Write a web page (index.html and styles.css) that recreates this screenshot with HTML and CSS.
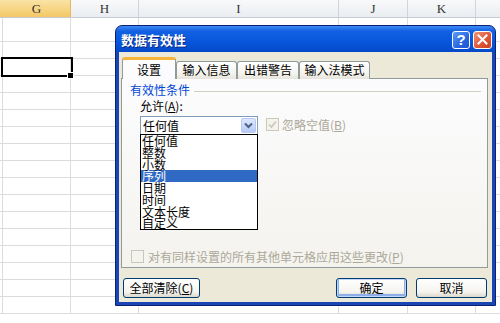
FILE: index.html
```html
<!DOCTYPE html>
<html lang="zh-CN">
<head>
<meta charset="utf-8">
<title>数据有效性</title>
<link rel="stylesheet" href="styles.css">
</head>
<body>
<div class="sheet">
  <div class="row hdr">
    <div class="c cF on"></div><div class="c cG on">G</div><div class="c cH">H</div><div class="c cI">I</div><div class="c cJ">J</div><div class="c cK">K</div><div class="c cL"></div>
  </div>
  <div class="row r1"><div class="c cF"></div><div class="c cG"></div><div class="c cH"></div><div class="c cI"></div><div class="c cJ"></div><div class="c cK"></div><div class="c cL"></div></div>
  <div class="row"><div class="c cF"></div><div class="c cG"></div><div class="c cH"></div><div class="c cI"></div><div class="c cJ"></div><div class="c cK"></div><div class="c cL"></div></div>
  <div class="row"><div class="c cF"></div><div class="c cG sel"></div><div class="c cH"></div><div class="c cI"></div><div class="c cJ"></div><div class="c cK"></div><div class="c cL"></div></div>
  <div class="row"><div class="c cF"></div><div class="c cG"></div><div class="c cH"></div><div class="c cI"></div><div class="c cJ"></div><div class="c cK"></div><div class="c cL"></div></div>
  <div class="row"><div class="c cF"></div><div class="c cG"></div><div class="c cH"></div><div class="c cI"></div><div class="c cJ"></div><div class="c cK"></div><div class="c cL"></div></div>
  <div class="row"><div class="c cF"></div><div class="c cG"></div><div class="c cH"></div><div class="c cI"></div><div class="c cJ"></div><div class="c cK"></div><div class="c cL"></div></div>
  <div class="row"><div class="c cF"></div><div class="c cG"></div><div class="c cH"></div><div class="c cI"></div><div class="c cJ"></div><div class="c cK"></div><div class="c cL"></div></div>
  <div class="row"><div class="c cF"></div><div class="c cG"></div><div class="c cH"></div><div class="c cI"></div><div class="c cJ"></div><div class="c cK"></div><div class="c cL"></div></div>
  <div class="row"><div class="c cF"></div><div class="c cG"></div><div class="c cH"></div><div class="c cI"></div><div class="c cJ"></div><div class="c cK"></div><div class="c cL"></div></div>
  <div class="row"><div class="c cF"></div><div class="c cG"></div><div class="c cH"></div><div class="c cI"></div><div class="c cJ"></div><div class="c cK"></div><div class="c cL"></div></div>
  <div class="row"><div class="c cF"></div><div class="c cG"></div><div class="c cH"></div><div class="c cI"></div><div class="c cJ"></div><div class="c cK"></div><div class="c cL"></div></div>
  <div class="row"><div class="c cF"></div><div class="c cG"></div><div class="c cH"></div><div class="c cI"></div><div class="c cJ"></div><div class="c cK"></div><div class="c cL"></div></div>
  <div class="row"><div class="c cF"></div><div class="c cG"></div><div class="c cH"></div><div class="c cI"></div><div class="c cJ"></div><div class="c cK"></div><div class="c cL"></div></div>
  <div class="row"><div class="c cF"></div><div class="c cG"></div><div class="c cH"></div><div class="c cI"></div><div class="c cJ"></div><div class="c cK"></div><div class="c cL"></div></div>
  <div class="row"><div class="c cF"></div><div class="c cG"></div><div class="c cH"></div><div class="c cI"></div><div class="c cJ"></div><div class="c cK"></div><div class="c cL"></div></div>
  <div class="row"><div class="c cF"></div><div class="c cG"></div><div class="c cH"></div><div class="c cI"></div><div class="c cJ"></div><div class="c cK"></div><div class="c cL"></div></div>
  <div class="row"><div class="c cF"></div><div class="c cG"></div><div class="c cH"></div><div class="c cI"></div><div class="c cJ"></div><div class="c cK"></div><div class="c cL"></div></div>
</div>

<div class="dlg">
  <div class="titlebar">
    <span class="title">数据有效性</span>
    <span class="tbtn help">?</span>
    <span class="tbtn close">
      <svg width="11" height="11" viewBox="0 0 11 11"><path d="M1.5 1.5 L9.5 9.5 M9.5 1.5 L1.5 9.5" stroke="#fff" stroke-width="2" stroke-linecap="square"/></svg>
    </span>
  </div>
  <div class="body">
    <div class="tabs">
      <div class="tab active">设置</div>
      <div class="tab t2">输入信息</div>
      <div class="tab t3">出错警告</div>
      <div class="tab t4">输入法模式</div>
    </div>
    <div class="panel">
      <div class="grp-head"><span class="grp-label">有效性条件</span><span class="grp-line"></span></div>
      <div class="allow">允许(<u>A</u>):</div>
      <div class="fields">
        <div class="combo">
          <span class="combo-text">任何值</span>
          <span class="combo-btn">
            <svg width="9" height="7" viewBox="0 0 9 7"><path d="M1 1.5 L4.5 5 L8 1.5" fill="none" stroke="#4D6185" stroke-width="2"/></svg>
          </span>
          <ul class="list">
            <li>任何值</li>
            <li>整数</li>
            <li>小数</li>
            <li class="hi">序列</li>
            <li>日期</li>
            <li>时间</li>
            <li>文本长度</li>
            <li>自定义</li>
          </ul>
        </div>
        <div class="chk">
          <span class="box checked">
            <svg width="9" height="9" viewBox="0 0 9 9"><path d="M1 4.5 L3.5 7 L8 1.5" fill="none" stroke="#C9C6B6" stroke-width="1.6"/></svg>
          </span>
          <span class="dis">忽略空值(<u>B</u>)</span>
        </div>
      </div>
      <div class="apply">
        <span class="box"></span>
        <span class="dis">对有同样设置的所有其他单元格应用这些更改(<u>P</u>)</span>
      </div>
    </div>
    <div class="btns">
      <button class="btn clear">全部清除(<u>C</u>)</button>
      <button class="btn ok">确定</button>
      <button class="btn cancel">取消</button>
    </div>
  </div>
</div>
</body>
</html>
```

FILE: styles.css
```css
html, body {
  margin: 0;
  padding: 0;
}
body {
  width: 500px;
  height: 323px;
  overflow: hidden;
  position: relative;
  background: #fff;
  font-family: "Noto Sans CJK SC", "Liberation Sans", sans-serif;
  font-size: 12px;
}

/* spreadsheet */
.sheet {
  background: #fff;
}
.row {
  display: flex;
  height: 17px;
  box-sizing: border-box;
  border-bottom: 1px solid #DADCDD;
}
.row.r1 {
  height: 24px;
}
.c {
  flex: none;
  box-sizing: border-box;
  border-right: 1px solid #DADCDD;
  height: 100%;
}
.cF { width: 3px; }
.cG { width: 68px; }
.cH { width: 68px; }
.cI { width: 200px; }
.cJ { width: 69px; }
.cK { width: 68px; }
.cL { width: 40px; }

.hdr {
  height: 18px;
  border-bottom: 1px solid #C6CBD2;
  background: linear-gradient(#F8F9FA, #EAEDF1);
}
.hdr .c {
  border-right-color: #D1D5DB;
  font-family: "Liberation Serif", serif;
  font-size: 13px;
  color: #333;
  text-align: center;
  line-height: 17px;
}
.hdr .c.on {
  background: linear-gradient(#FAE3A6, #F3C865);
  border-right-color: #E7B95A;
}
.hdr .cF.on {
  border-right: none;
}
.sel {
  position: relative;
  outline: 2px solid #000;
  outline-offset: 0;
}
.sel::after {
  content: "";
  position: absolute;
  right: -4px;
  bottom: -4px;
  width: 5px;
  height: 5px;
  background: #000;
  border: 1px solid #fff;
}

/* dialog */
.dlg {
  position: absolute;
  left: 115px;
  top: 25px;
  width: 381px;
  height: 281px;
  box-sizing: border-box;
  border: 1px solid #0B2272;
  border-radius: 7px 7px 0 0;
  padding: 0 3px 3px;
  background: linear-gradient(#3D8AF5 0, #1361E2 5px, #0756DC 16px, #0449C9 26px, #1A45B5 27px, #1A45B5 100%);
  display: flex;
  flex-direction: column;
  box-shadow: 0 0 0 0 transparent;
}
.titlebar {
  height: 26px;
  display: flex;
  align-items: center;
  padding-left: 2px;
  padding-top: 1px;
  box-sizing: border-box;
}
.title {
  color: #fff;
  font-weight: bold;
  font-size: 13px;
  text-shadow: 1px 1px 0 #0A2A80;
  letter-spacing: 0;
}
.tbtn {
  width: 18px;
  height: 18px;
  box-sizing: border-box;
  border: 1px solid #fff;
  border-radius: 3px;
  display: flex;
  align-items: center;
  justify-content: center;
}
.help {
  margin-left: auto;
  background: linear-gradient(135deg, #5C9BF8, #2A66E0 60%, #1E56D0);
  color: #fff;
  font-family: "Liberation Sans", sans-serif;
  font-weight: bold;
  font-size: 15px;
  line-height: 16px;
}
.close {
  margin-left: 3px;
  width: 19px;
  background: linear-gradient(135deg, #F1967A, #E0573A 55%, #C9411F);
}

.body {
  flex: 1;
  background: #ECE9D8;
  padding: 5px 5px 0 2px;
  display: flex;
  flex-direction: column;
}
.tabs {
  display: flex;
  align-items: flex-end;
  padding-left: 1px;
  position: relative;
  z-index: 1;
  margin-bottom: -1px;
}
.tab {
  box-sizing: border-box;
  height: 18px;
  border: 1px solid #919B9C;
  border-bottom: none;
  border-radius: 3px 3px 0 0;
  background: linear-gradient(#FFFFFF, #F3F2EC 70%, #E6E4DA);
  text-align: center;
  line-height: 16px;
  color: #000;
  flex: none;
}
.tab.active {
  width: 54px;
  height: 22px;
  border-top: 3px solid #F7B33A;
  background: #FCFCFE;
  line-height: 19px;
}
.t2 { width: 61px; }
.t3 { width: 62px; }
.t4 { width: 71px; }

.panel {
  height: 190px;
  width: 367px;
  box-sizing: border-box;
  border: 1px solid #919B9C;
  background: linear-gradient(#FCFCFE, #F4F3EE);
  display: flex;
  flex-direction: column;
}
.grp-head {
  display: flex;
  align-items: center;
  margin: 4px 6px 0 8px;
  height: 14px;
}
.grp-label {
  color: #0046D5;
  line-height: 14px;
}
.grp-line {
  flex: 1;
  height: 1px;
  background: #D0D0BF;
  margin-left: 4px;
  margin-top: 2px;
}
.allow {
  margin: 2px 0 0 18px;
  height: 14px;
  line-height: 14px;
}
.fields {
  display: flex;
  margin-top: 3px;
  padding-left: 18px;
}
.combo {
  position: relative;
  width: 118px;
  height: 19px;
  box-sizing: border-box;
  border: 1px solid #7F9DB9;
  background: #fff;
  display: flex;
  align-items: center;
}
.combo-text {
  flex: 1;
  padding-left: 2px;
  line-height: 17px;
}
.combo-btn {
  width: 15px;
  height: 15px;
  margin-right: 1px;
  box-sizing: border-box;
  border: 1px solid #B9CAF0;
  border-radius: 2px;
  background: linear-gradient(#DCE6FD, #B8CBF6);
  display: flex;
  align-items: center;
  justify-content: center;
}
.list {
  position: absolute;
  left: -1px;
  top: 17px;
  width: 118px;
  margin: 0;
  padding: 0;
  list-style: none;
  border: 1px solid #000;
  background: #fff;
  box-sizing: border-box;
  z-index: 2;
}
.list li {
  height: 11.75px;
  line-height: 12px;
  padding-left: 1px;
  font-size: 12px;
  white-space: nowrap;
  overflow: visible;
}
.list li.hi {
  background: #316AC5;
  color: #fff;
}
.chk {
  display: flex;
  align-items: center;
  margin-left: 8px;
  height: 15px;
  margin-top: 1px;
}
.box {
  width: 13px;
  height: 13px;
  box-sizing: border-box;
  border: 1px solid #CAC8BB;
  background: #F4F3EC;
  display: inline-flex;
  align-items: center;
  justify-content: center;
  flex: none;
}
.dis {
  color: #ACA899;
}
.chk .dis {
  margin-left: 3px;
}
.apply {
  margin-top: auto;
  margin-bottom: 4px;
  margin-left: 9px;
  display: flex;
  align-items: center;
  height: 14px;
}
.apply .dis {
  margin-left: 4px;
}
.btns {
  display: flex;
  margin-top: 10px;
  padding-left: 2px;
}
.btn {
  height: 20px;
  box-sizing: border-box;
  border: 1px solid #003C74;
  border-radius: 3px;
  background: linear-gradient(#FFFFFF, #F5F4EF 70%, #DCD8CC);
  font-family: "Noto Sans CJK SC", "Liberation Sans", sans-serif;
  font-size: 12px;
  line-height: 16px;
  padding: 0;
  color: #000;
}
.clear {
  width: 77px;
}
.ok {
  width: 71px;
  margin-left: auto;
  box-shadow: inset 0 0 0 1px #C2D6F8, inset 0 -1px 0 2px #8DAEE6;
}
.cancel {
  width: 71px;
  margin-left: 9px;
}
```
